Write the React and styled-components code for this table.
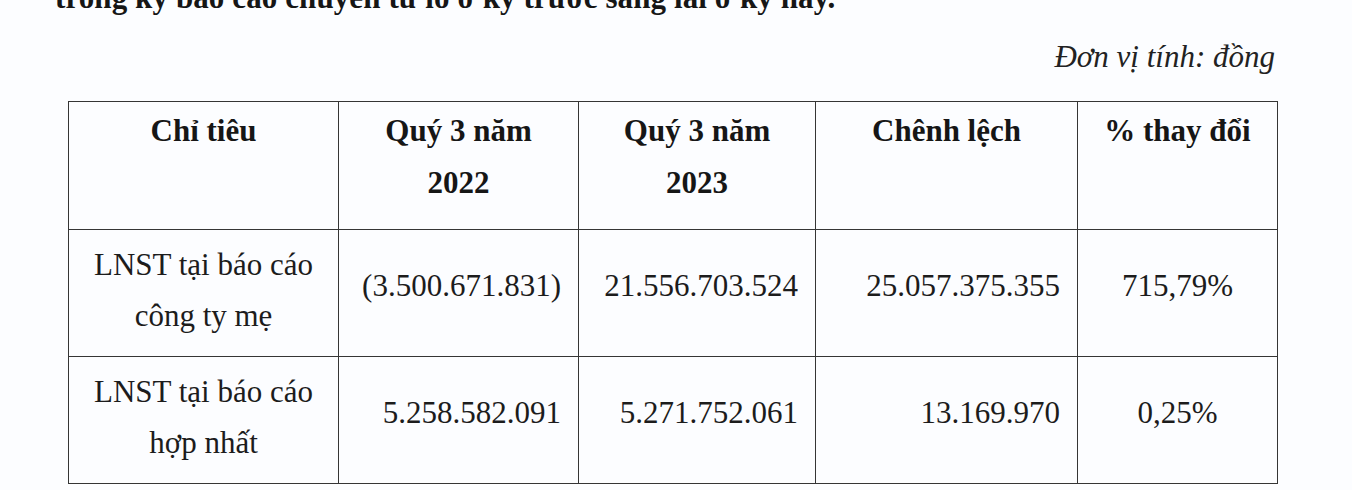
import React from 'react';
import styled, { createGlobalStyle } from 'styled-components';

const GlobalStyle = createGlobalStyle`
  html, body {
    margin: 0;
    padding: 0;
    background: #fcfdff;
  }
  body {
    font-family: "Liberation Serif", "Times New Roman", serif;
    color: #1c1c1c;
    overflow: hidden;
  }
`;

const Page = styled.div`
  width: 1352px;
  height: 490px;
  display: flex;
  flex-direction: column;
  background: #fcfdff;
`;

const Intro = styled.p`
  margin: -20px 0 0 55px;
  font-size: 31px;
  font-weight: bold;
  line-height: 36px;
  letter-spacing: 0.1px;
  color: #161616;
  white-space: nowrap;
`;

const Unit = styled.div`
  margin-top: 23px;
  padding-right: 77px;
  text-align: right;
  font-size: 31px;
  font-style: italic;
  line-height: 36px;
  color: #222;
`;

const Table = styled.table`
  margin: 26px 0 0 68px;
  width: 1209px;
  border-collapse: collapse;
  table-layout: fixed;
  font-size: 31px;
`;

const Row = styled.tr`
  height: ${(p) => p.$height}px;
`;

const HeadCell = styled.th`
  border: 1.5px solid #353535;
  vertical-align: top;
  text-align: center;
  padding: 3px 8px 0;
  font-weight: bold;
  line-height: 52px;
  color: #161616;
`;

const LabelCell = styled.td`
  border: 1.5px solid #353535;
  vertical-align: top;
  text-align: center;
  padding: 9px 8px 0;
  line-height: 51px;
`;

const ValueCell = styled.td`
  border: 1.5px solid #353535;
  vertical-align: middle;
  text-align: ${(p) => (p.$center ? 'center' : 'right')};
  padding: 0 ${(p) => (p.$center ? 8 : 17)}px 14px 8px;
  line-height: 52px;
  white-space: nowrap;
`;

const columns = [270, 240, 237, 262, 200];

const headers = [
  ['Chỉ tiêu'],
  ['Quý 3 năm', '2022'],
  ['Quý 3 năm', '2023'],
  ['Chênh lệch'],
  ['% thay đổi'],
];

const rows = [
  {
    label: ['LNST tại báo cáo', 'công ty mẹ'],
    values: ['(3.500.671.831)', '21.556.703.524', '25.057.375.355', '715,79%'],
  },
  {
    label: ['LNST tại báo cáo', 'hợp nhất'],
    values: ['5.258.582.091', '5.271.752.061', '13.169.970', '0,25%'],
  },
];

const Lines = ({ lines }) =>
  lines.map((line, i) => (
    <React.Fragment key={i}>
      {i > 0 && <br />}
      {line}
    </React.Fragment>
  ));

export default function App() {
  return (
    <Page>
      <GlobalStyle />
      <Intro>trong kỳ báo cáo chuyển từ lỗ ở kỳ trước sang lãi ở kỳ này.</Intro>
      <Unit>Đơn vị tính: đồng</Unit>
      <Table>
        <colgroup>
          {columns.map((w, i) => (
            <col key={i} style={{ width: w }} />
          ))}
        </colgroup>
        <thead>
          <Row $height={128}>
            {headers.map((h, i) => (
              <HeadCell key={i}>
                <Lines lines={h} />
              </HeadCell>
            ))}
          </Row>
        </thead>
        <tbody>
          {rows.map((r, i) => (
            <Row key={i} $height={127}>
              <LabelCell>
                <Lines lines={r.label} />
              </LabelCell>
              {r.values.map((v, j) => (
                <ValueCell key={j} $center={j === 3}>
                  {v}
                </ValueCell>
              ))}
            </Row>
          ))}
        </tbody>
      </Table>
    </Page>
  );
}
